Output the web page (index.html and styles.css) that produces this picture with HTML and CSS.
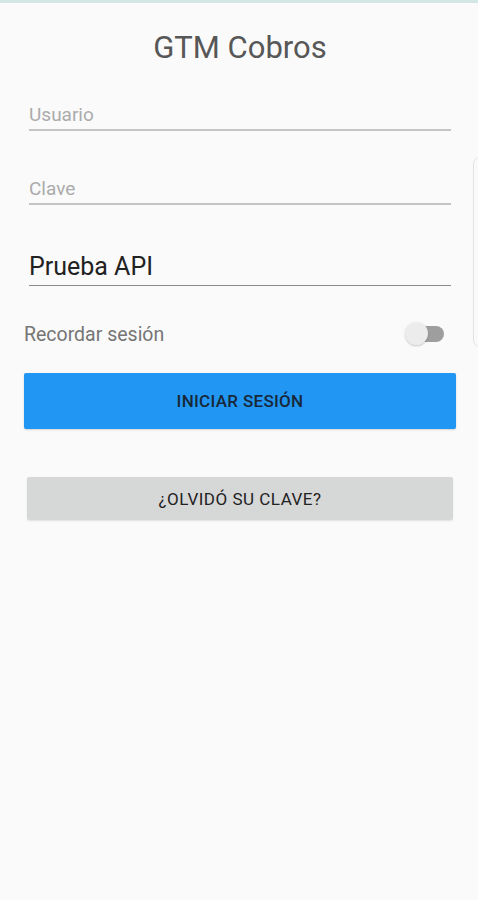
FILE: index.html
```html
<!DOCTYPE html>
<html lang="es">
<head>
<meta charset="UTF-8">
<meta name="viewport" content="width=device-width, initial-scale=1.0">
<title>GTM Cobros</title>
<link rel="stylesheet" href="styles.css">
</head>
<body>
<div class="status-strip"></div>
<div class="edge-handle"></div>
<main class="login">
    <h1 class="title">GTM Cobros</h1>
    <div class="field field-empty field-usuario">
        <span class="placeholder">Usuario</span>
    </div>
    <div class="field field-empty field-clave">
        <span class="placeholder">Clave</span>
    </div>
    <div class="field field-filled">
        <span class="value">Prueba API</span>
    </div>
    <div class="remember">
        <span>Recordar sesión</span>
        <div class="switch"><div class="switch-track"></div><div class="switch-thumb"></div></div>
    </div>
    <button class="btn btn-primary">INICIAR SESIÓN</button>
    <button class="btn btn-secondary">¿OLVIDÓ SU CLAVE?</button>
</main>
</body>
</html>
```

FILE: styles.css
```css
body {
    margin: 0;
    background-color: #fafafa;
    font-family: Roboto, "Noto Sans", sans-serif;
    color: #333;
    height: 900px;
    overflow: hidden;
}

.status-strip {
    height: 3px;
    background-color: #d3e6e6;
}

.edge-handle {
    position: absolute;
    left: 473px;
    top: 157px;
    width: 12px;
    height: 188px;
    border: 1px solid #e2e2e2;
    border-radius: 8px;
}

.login {
    display: flex;
    flex-direction: column;
    padding: 0 22px 0 24px;
}

.title {
    margin: 27px 0 0;
    text-align: center;
    font-size: 31px;
    font-weight: 400;
    color: #575757;
    line-height: 36px;
}

.field {
    margin: 0 5px;
    display: flex;
    align-items: flex-end;
}

.field-empty {
    height: 26px;
    border-bottom: 2px solid #c4c4c4;
    padding-bottom: 3px;
}

.field-usuario {
    margin-top: 34px;
}

.field-clave {
    margin-top: 43px;
}

.placeholder {
    font-size: 19px;
    color: #ababab;
    line-height: 22px;
}

.field-filled {
    margin-top: 45px;
    height: 32px;
    border-bottom: 1px solid #8a8a8a;
    padding-bottom: 3px;
}

.value {
    font-size: 25px;
    color: #222;
    line-height: 30px;
}

.remember {
    display: flex;
    justify-content: space-between;
    align-items: center;
    margin-top: 36px;
    padding-right: 12px;
    font-size: 19.5px;
    color: #757575;
    height: 24px;
}

.switch {
    position: relative;
    width: 39px;
    height: 24px;
}

.switch-track {
    position: absolute;
    left: 8px;
    top: 4px;
    width: 31px;
    height: 16px;
    border-radius: 8px;
    background-color: #9e9e9e;
}

.switch-thumb {
    position: absolute;
    left: 0;
    top: 0;
    width: 23px;
    height: 23px;
    border-radius: 50%;
    background-color: #ececec;
    box-shadow: 0 1px 2px rgba(0,0,0,0.2);
}

.btn {
    border: none;
    font-family: Roboto, "Noto Sans", sans-serif;
    font-weight: 500;
    font-size: 17px;
    letter-spacing: 0.3px;
    border-radius: 2px;
    cursor: pointer;
}

.btn-primary {
    margin-top: 27px;
    height: 56px;
    background-color: #2196f3;
    color: #182838;
    box-shadow: 0 1px 2px rgba(0,0,0,0.15);
}

.btn-secondary {
    margin: 48px 3px 0;
    height: 43px;
    background-color: #d6d7d7;
    color: #222;
    font-weight: 400;
    letter-spacing: 0.5px;
    box-shadow: 0 1px 2px rgba(0,0,0,0.1);
}
```
